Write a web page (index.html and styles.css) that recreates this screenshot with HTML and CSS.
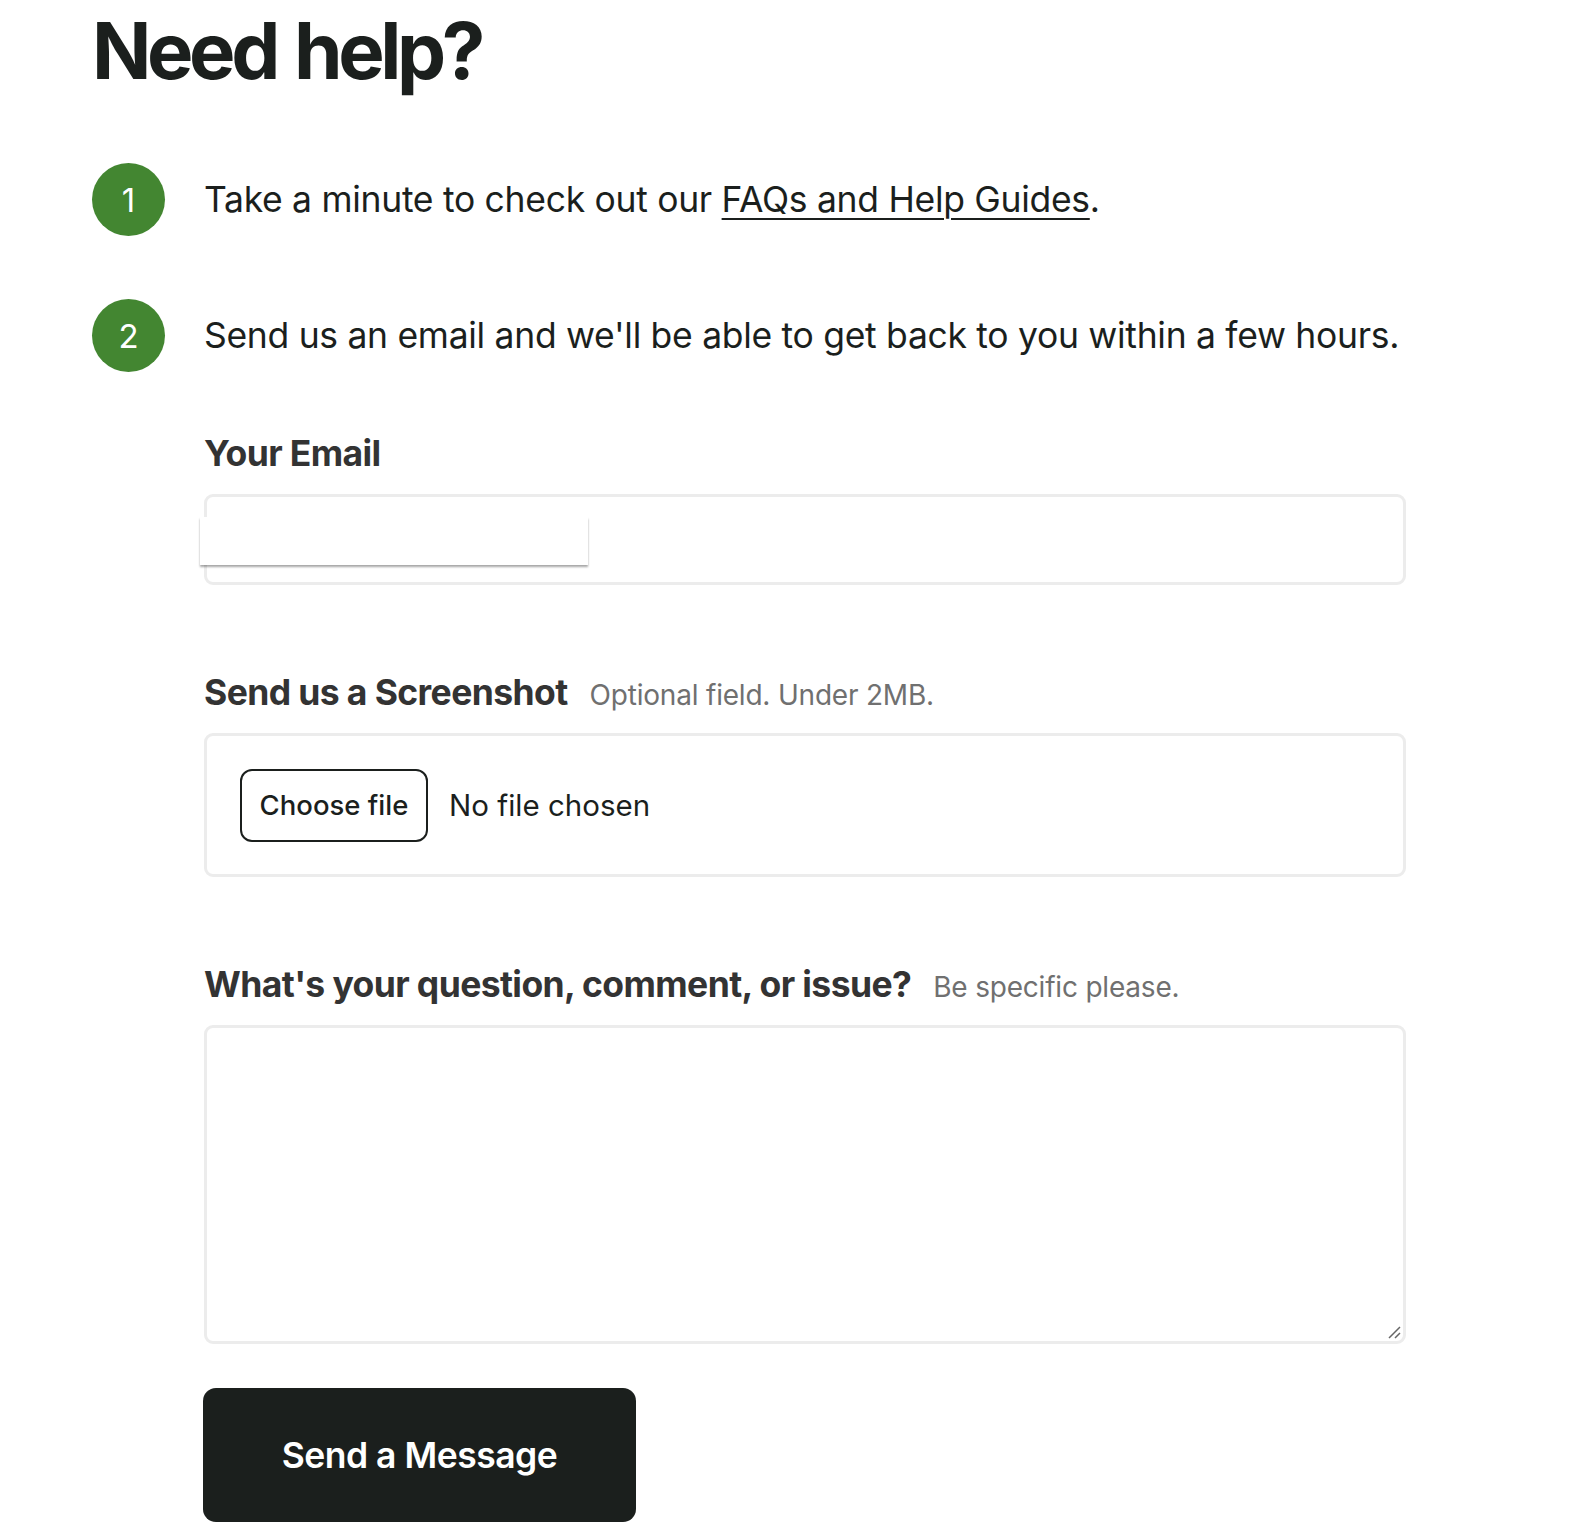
FILE: index.html
```html
<!DOCTYPE html>
<html lang="en">
<head>
<meta charset="utf-8">
<title>Need help?</title>
<link rel="stylesheet" href="styles.css">
</head>
<body>
<main class="page">
  <h1 class="title">Need help?</h1>
  <ol class="steps">
    <li class="step"><span class="num">1</span><p class="step-text">Take a minute to check out our <a href="#" class="link">FAQs and Help Guides</a>.</p></li>
    <li class="step"><span class="num">2</span><p class="step-text">Send us an email and we'll be able to get back to you within a few hours.</p></li>
  </ol>
  <form class="form">
    <div class="field">
      <label class="label"><span class="label-main">Your Email</span></label>
      <div class="box email-box">
        <div class="autofill"></div>
      </div>
    </div>
    <div class="field">
      <label class="label"><span class="label-main">Send us a Screenshot</span><span class="hint">Optional field. Under 2MB.</span></label>
      <div class="box file-box">
        <span class="file-btn">Choose file</span>
        <span class="file-name">No file chosen</span>
      </div>
    </div>
    <div class="field">
      <label class="label"><span class="label-main">What's your question, comment, or issue?</span><span class="hint">Be specific please.</span></label>
      <div class="box text-box">
        <svg class="grip" width="16" height="16" viewBox="0 0 16 16"><path d="M15 4 L4 15 M15 10 L10 15" stroke="#666" stroke-width="1.5" fill="none"/></svg>
      </div>
    </div>
    <button type="button" class="send">Send a Message</button>
  </form>
</main>
</body>
</html>
```

FILE: styles.css
```css
* { box-sizing: border-box; }
body {
  margin: 0;
  background: #fff;
  font-family: Inter, "Noto Sans", sans-serif;
  color: #1b1f1d;
}
.page {
  padding: 12px 0 0 92px;
}
.title {
  margin: 0;
  font-size: 78px;
  line-height: 1;
  font-weight: 700;
  letter-spacing: -4.4px;
  word-spacing: 4px;
  color: #1b1f1d;
}
.steps {
  list-style: none;
  margin: 73px 0 0;
  padding: 0;
  display: flex;
  flex-direction: column;
  gap: 63px;
}
.step {
  display: flex;
  align-items: center;
  gap: 39px;
}
.num {
  flex: none;
  width: 73px;
  height: 73px;
  border-radius: 50%;
  background: #438631;
  color: #fff;
  display: flex;
  align-items: center;
  justify-content: center;
  font-size: 33px;
  font-weight: 400;
}
.step-text {
  margin: 0;
  font-size: 35.5px;
  letter-spacing: -0.3px;
  color: #1b1f1d;
}
.link {
  color: #1b1f1d;
  text-decoration: underline;
  text-decoration-thickness: 2px;
  text-underline-offset: 6px;
}
.form {
  margin: 60px 0 0 112px;
  width: 1202px;
  display: flex;
  flex-direction: column;
}
.field {
  display: flex;
  flex-direction: column;
  gap: 19px;
  margin-bottom: 86px;
}
.field:last-of-type { margin-bottom: 44px; }
.label {
  display: flex;
  align-items: baseline;
  gap: 22px;
}
.label-main {
  font-size: 35.5px;
  font-weight: 700;
  color: #333;
  letter-spacing: -0.6px;
}
.hint {
  font-size: 28px;
  color: #707070;
  letter-spacing: -0.2px;
}
.box {
  position: relative;
  border: 3px solid #ececec;
  border-radius: 9px;
  background: #fff;
}
.email-box { height: 91px; }
.autofill {
  position: absolute;
  left: -7px;
  top: 20px;
  width: 388px;
  height: 48px;
  background: #fff;
  box-shadow: 0 2px 2px rgba(0,0,0,0.35);
}
.file-box {
  height: 144px;
  display: flex;
  align-items: center;
  padding-left: 33px;
  gap: 21px;
}
.file-btn {
  display: inline-flex;
  align-items: center;
  justify-content: center;
  width: 188px;
  height: 73px;
  border: 2px solid #1b1f1d;
  border-radius: 12px;
  font-size: 27.5px;
  font-weight: 500;
  color: #1b1f1d;
}
.file-name {
  font-size: 29.5px;
  color: #1b1f1d;
}
.text-box { height: 319px; }
.grip {
  position: absolute;
  right: 2px;
  bottom: 2px;
}
.send {
  width: 433px;
  height: 134px;
  border: none;
  border-radius: 13px;
  background: #1b1f1d;
  color: #fff;
  font-family: Inter, "Noto Sans", sans-serif;
  font-size: 35.5px;
  font-weight: 600;
  letter-spacing: -0.5px;
  cursor: pointer;
  margin-left: -1px;
}
```
